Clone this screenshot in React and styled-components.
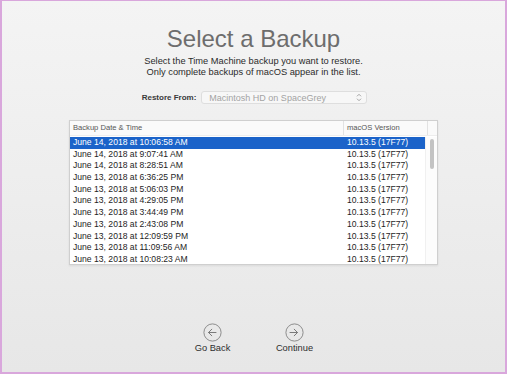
import React from 'react'
import { styled, createGlobalStyle } from 'styled-components'

const GlobalStyle = createGlobalStyle`
  html, body {
    margin: 0;
    padding: 0;
  }
  body {
    font-family: 'Liberation Sans', Arial, sans-serif;
  }
`

const backups = [
  'June 14, 2018 at 10:06:58 AM',
  'June 14, 2018 at 9:07:41 AM',
  'June 14, 2018 at 8:28:51 AM',
  'June 13, 2018 at 6:36:25 PM',
  'June 13, 2018 at 5:06:03 PM',
  'June 13, 2018 at 4:29:05 PM',
  'June 13, 2018 at 3:44:49 PM',
  'June 13, 2018 at 2:43:08 PM',
  'June 13, 2018 at 12:09:59 PM',
  'June 13, 2018 at 11:09:56 AM',
  'June 13, 2018 at 10:08:23 AM',
]

function ArrowCircle({ dir }) {
  const d = dir === 'left'
    ? 'M13 9.5H5.5 M8.8 6.2L5.5 9.5L8.8 12.8'
    : 'M5 9.5H12.5 M9.2 6.2L12.5 9.5L9.2 12.8'
  return (
    <svg width="19" height="19" viewBox="0 0 19 19">
      <circle cx="9.5" cy="9.5" r="8.6" fill="none" stroke="#8c8c8c" strokeWidth="1" />
      <path d={d} fill="none" stroke="#7a7a7a" strokeWidth="1" strokeLinecap="round" strokeLinejoin="round" />
    </svg>
  )
}

function App() {
  return (
    <>
      <GlobalStyle />
      <Frame>
        <Title>Select a Backup</Title>
        <Subtitle>
          Select the Time Machine backup you want to restore.
          <br />
          Only complete backups of macOS appear in the list.
        </Subtitle>

        <RestoreRow>
          <Label>Restore From:</Label>
          <Popup>
            <span>Macintosh HD on SpaceGrey</span>
            <svg width="6" height="9" viewBox="0 0 6 9">
              <path d="M1 3.3L3 1.3L5 3.3 M1 5.7L3 7.7L5 5.7" fill="none" stroke="#9a9a9a" strokeWidth="0.9" />
            </svg>
          </Popup>
        </RestoreRow>

        <Table>
          <HeaderRow>
            <HeaderCell>Backup Date &amp; Time</HeaderCell>
            <HeaderCell $divider>macOS Version</HeaderCell>
            <HeaderCell $divider />
          </HeaderRow>
          <Body>
            <List>
              {backups.map((b, i) => (
                <Row key={b} $selected={i === 0}>
                  <span>{b}</span>
                  <span>10.13.5 (17F77)</span>
                </Row>
              ))}
            </List>
            <ScrollTrack>
              <Thumb />
            </ScrollTrack>
          </Body>
        </Table>

        <Buttons>
          <NavButton>
            <ArrowCircle dir="left" />
            <span>Go Back</span>
          </NavButton>
          <NavButton>
            <ArrowCircle dir="right" />
            <span>Continue</span>
          </NavButton>
        </Buttons>
      </Frame>
    </>
  )
}

export default App

const Frame = styled.div`
width: 507px;
height: 374px;
box-sizing: border-box;
border: 2px solid #d9a7dc;
border-top-width: 1px;
background: linear-gradient(#f4f4f4, #e7e7e7);
display: flex;
flex-direction: column;
align-items: center;
overflow: hidden;
`

const Title = styled.h1`
margin: 24px 0 0;
font-size: 24px;
line-height: 28px;
font-weight: 400;
color: #6d6d6d;
`

const Subtitle = styled.p`
margin: 3px 0 0;
font-size: 9.3px;
line-height: 11px;
text-align: center;
color: #2b2b2b;
`

const RestoreRow = styled.div`
display: flex;
align-items: center;
gap: 5px;
margin-top: 13px;
margin-left: 2px;
`

const Label = styled.span`
font-size: 8px;
font-weight: 700;
color: #3a3a3a;
`

const Popup = styled.div`
width: 166px;
height: 13px;
box-sizing: border-box;
display: flex;
align-items: center;
justify-content: space-between;
padding: 0 4px 0 7px;
border: 1px solid #dedede;
border-radius: 3px;
background: #f7f7f7;
font-size: 9px;
color: #a3a3a3;
`

const Table = styled.div`
width: 369px;
height: 145px;
margin-top: 16px;
box-sizing: border-box;
border: 1px solid #cfcfcf;
background: #fff;
display: flex;
flex-direction: column;
overflow: hidden;
box-shadow: 0 1px 2px rgba(0, 0, 0, 0.08);
`

const HeaderRow = styled.div`
display: grid;
grid-template-columns: 273px 84px 1fr;
height: 14px;
flex-shrink: 0;
background: #fafafa;
border-bottom: 1px solid #ededed;
`

const HeaderCell = styled.div`
font-size: 7.6px;
line-height: 14px;
padding-left: 3px;
color: #555;
border-left: ${p => (p.$divider ? '1px solid #e2e2e2' : 'none')};
`

const Body = styled.div`
display: flex;
flex: 1;
padding-top: 1px;
`

const List = styled.div`
flex: 1;
`

const Row = styled.div`
display: grid;
grid-template-columns: 274px 1fr;
height: 11.7px;
line-height: 11.7px;
padding-left: 3px;
font-size: 8.6px;
color: ${p => (p.$selected ? '#fff' : '#1e1e1e')};
background: ${p => (p.$selected ? '#1b63c9' : 'transparent')};
white-space: nowrap;
`

const ScrollTrack = styled.div`
width: 11px;
flex-shrink: 0;
display: flex;
justify-content: center;
padding-top: 2px;
background: #fcfcfc;
border-left: 1px solid #f0f0f0;
`

const Thumb = styled.div`
width: 4px;
height: 30px;
border-radius: 2px;
background: #c3c3c3;
`

const Buttons = styled.div`
display: flex;
gap: 32px;
margin-top: 58px;
`

const NavButton = styled.div`
width: 50px;
display: flex;
flex-direction: column;
align-items: center;
gap: 1px;
font-size: 9.3px;
color: #2e2e2e;
`
